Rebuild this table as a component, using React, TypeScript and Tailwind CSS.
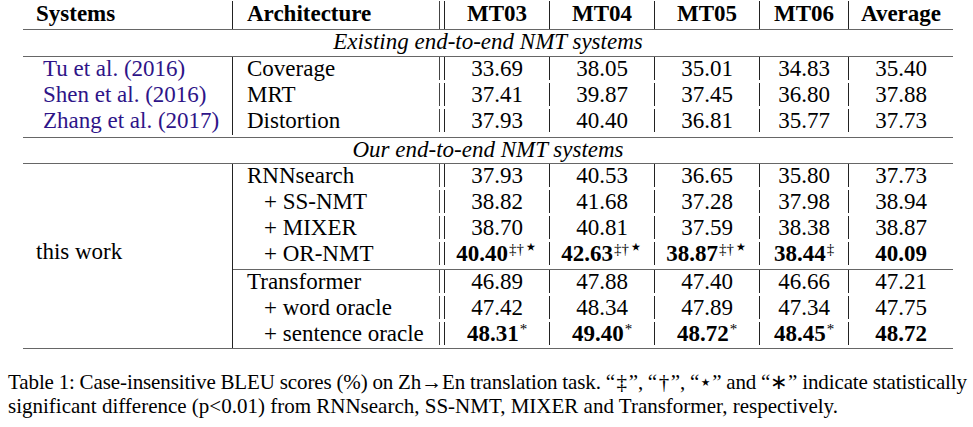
import React from "react";

type Row = {
  arch: string;
  indent?: boolean;
  vals: { v: string; sup?: string; bold?: boolean }[];
};

const rightCols = "grid grid-cols-[207px_4px_105px_105px_105px_89px_105px]";
const numCell = "border-l border-[#222] flex items-center justify-center";

// the star glyph is tiny in the fallback font, so it gets a bigger size of its own
function Sup({ s }: { s: string }) {
  return (
    <sup className="text-[15px] font-normal ml-px">
      {s.split("").map((ch, i) =>
        ch === "⋆" ? (
          <span key={i} className="text-[22px]">
            {ch}
          </span>
        ) : (
          <span key={i}>{ch}</span>
        )
      )}
    </sup>
  );
}

function NumCells({ vals }: { vals: Row["vals"] }) {
  return (
    <>
      {vals.map((c, i) => (
        <div key={i} className={numCell}>
          <span className={c.bold ? "font-bold" : ""}>
            {c.v}
            {c.sup && <Sup s={c.sup} />}
          </span>
        </div>
      ))}
    </>
  );
}

function DataRow({ row, h }: { row: Row; h: string }) {
  return (
    <div className={`${rightCols} ${h}`}>
      <div className={`border-r border-[#444] flex items-center ${row.indent ? "pl-[31px]" : "pl-[14px]"}`}>
        {row.arch}
      </div>
      <div />
      <NumCells vals={row.vals} />
    </div>
  );
}

const plain = (...xs: string[]) => xs.map((v) => ({ v }));

const existing = [
  { sys: "Tu et al. (2016)", row: { arch: "Coverage", vals: plain("33.69", "38.05", "35.01", "34.83", "35.40") } },
  { sys: "Shen et al. (2016)", row: { arch: "MRT", vals: plain("37.41", "39.87", "37.45", "36.80", "37.88") } },
  { sys: "Zhang et al. (2017)", row: { arch: "Distortion", vals: plain("37.93", "40.40", "36.81", "35.77", "37.73") } },
];

const rnn: Row[] = [
  { arch: "RNNsearch", vals: plain("37.93", "40.53", "36.65", "35.80", "37.73") },
  { arch: "+ SS-NMT", indent: true, vals: plain("38.82", "41.68", "37.28", "37.98", "38.94") },
  { arch: "+ MIXER", indent: true, vals: plain("38.70", "40.81", "37.59", "38.38", "38.87") },
  {
    arch: "+ OR-NMT",
    indent: true,
    vals: [
      { v: "40.40", sup: "‡†⋆", bold: true },
      { v: "42.63", sup: "‡†⋆", bold: true },
      { v: "38.87", sup: "‡†⋆", bold: true },
      { v: "38.44", sup: "‡", bold: true },
      { v: "40.09", bold: true },
    ],
  },
];

const trans: Row[] = [
  { arch: "Transformer", vals: plain("46.89", "47.88", "47.40", "46.66", "47.21") },
  { arch: "+ word oracle", indent: true, vals: plain("47.42", "48.34", "47.89", "47.34", "47.75") },
  {
    arch: "+ sentence oracle",
    indent: true,
    vals: [
      { v: "48.31", sup: "*", bold: true },
      { v: "49.40", sup: "*", bold: true },
      { v: "48.72", sup: "*", bold: true },
      { v: "48.45", sup: "*", bold: true },
      { v: "48.72", bold: true },
    ],
  },
];

const Rule = () => <div className="h-px bg-[#666]" />;

export default function App() {
  return (
    <div className="w-[973px] h-[427px] bg-white text-black overflow-hidden font-['Liberation_Serif','Times_New_Roman',serif]">
      <div className="ml-[23px] w-[930px] pt-[1px] text-[23px] leading-none">
        {/* header */}
        <div className="grid grid-cols-[210px_720px] h-[28px] font-bold">
          <div className="border-r border-[#222] flex items-center pl-[13px] pb-[4px]">Systems</div>
          <div className={rightCols}>
            <div className="border-r border-[#444] flex items-center pl-[14px] pb-[4px]">Architecture</div>
            <div />
            {["MT03", "MT04", "MT05", "MT06", "Average"].map((h) => (
              <div key={h} className={`${numCell} pb-[4px]`}>
                {h}
              </div>
            ))}
          </div>
        </div>
        <Rule />
        <div className="h-[26px] flex items-center justify-center italic pb-[3px]">Existing end-to-end NMT systems</div>
        <Rule />

        {/* existing systems */}
        <div className="pb-[2px] grid grid-cols-[210px_720px]">
          {existing.map((e) => (
            <React.Fragment key={e.sys}>
              <div className="border-r border-[#222] flex items-center pl-[20px] text-[#2e1488] pb-[3px]">{e.sys}</div>
              <DataRow row={e.row} h="h-[25.5px] pb-[3px]" />
            </React.Fragment>
          ))}
        </div>
        <Rule />
        <div className="h-[25px] flex items-center justify-center italic pb-[2px]">Our end-to-end NMT systems</div>
        <Rule />

        {/* this work */}
        <div className="grid grid-cols-[210px_720px]">
          <div className="border-r border-[#222] flex items-center pl-[13px] pb-[10px]">this work</div>
          <div className="flex flex-col">
            <div className="pb-[1px]">
              {rnn.map((r) => (
                <DataRow key={r.arch} row={r} h="h-[26px] pb-[3px]" />
              ))}
            </div>
            <Rule />
            <div>
              {trans.map((r) => (
                <DataRow key={r.arch} row={r} h="h-[26px] pb-[3px]" />
              ))}
            </div>
          </div>
        </div>
        <Rule />
      </div>

      {/* caption */}
      <div className="ml-[8px] w-[959px] mt-[21px] text-[21px] leading-[24px]">
        <div className="text-justify [text-align-last:justify] [word-spacing:-2px] tracking-[-0.1px]">
          Table 1: Case-insensitive BLEU scores (%) on Zh→En translation task. “‡”, “†”, “⋆” and “∗” indicate statistically
        </div>
        <div>significant difference (p&lt;0.01) from RNNsearch, SS-NMT, MIXER and Transformer, respectively.</div>
      </div>
    </div>
  );
}
